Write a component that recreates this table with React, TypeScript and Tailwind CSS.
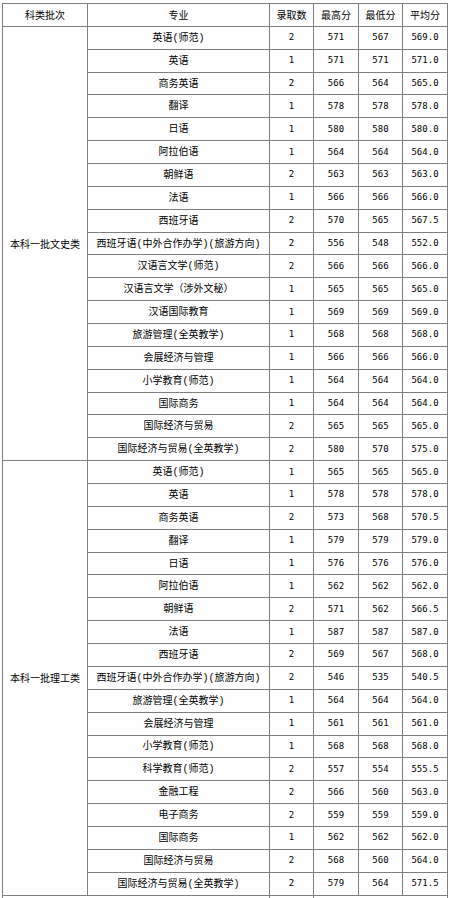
type Row = [string, number, number, number, string];

const groups: { label: string; rows: Row[] }[] = [
  {
    label: "本科一批文史类",
    rows: [
      ["英语(师范)", 2, 571, 567, "569.0"],
      ["英语", 1, 571, 571, "571.0"],
      ["商务英语", 2, 566, 564, "565.0"],
      ["翻译", 1, 578, 578, "578.0"],
      ["日语", 1, 580, 580, "580.0"],
      ["阿拉伯语", 1, 564, 564, "564.0"],
      ["朝鲜语", 2, 563, 563, "563.0"],
      ["法语", 1, 566, 566, "566.0"],
      ["西班牙语", 2, 570, 565, "567.5"],
      ["西班牙语(中外合作办学)(旅游方向)", 2, 556, 548, "552.0"],
      ["汉语言文学(师范)", 2, 566, 566, "566.0"],
      ["汉语言文学（涉外文秘）", 1, 565, 565, "565.0"],
      ["汉语国际教育", 1, 569, 569, "569.0"],
      ["旅游管理(全英教学)", 1, 568, 568, "568.0"],
      ["会展经济与管理", 1, 566, 566, "566.0"],
      ["小学教育(师范)", 1, 564, 564, "564.0"],
      ["国际商务", 1, 564, 564, "564.0"],
      ["国际经济与贸易", 2, 565, 565, "565.0"],
      ["国际经济与贸易(全英教学)", 2, 580, 570, "575.0"],
    ],
  },
  {
    label: "本科一批理工类",
    rows: [
      ["英语(师范)", 1, 565, 565, "565.0"],
      ["英语", 1, 578, 578, "578.0"],
      ["商务英语", 2, 573, 568, "570.5"],
      ["翻译", 1, 579, 579, "579.0"],
      ["日语", 1, 576, 576, "576.0"],
      ["阿拉伯语", 1, 562, 562, "562.0"],
      ["朝鲜语", 2, 571, 562, "566.5"],
      ["法语", 1, 587, 587, "587.0"],
      ["西班牙语", 2, 569, 567, "568.0"],
      ["西班牙语(中外合作办学)(旅游方向)", 2, 546, 535, "540.5"],
      ["旅游管理(全英教学)", 1, 564, 564, "564.0"],
      ["会展经济与管理", 1, 561, 561, "561.0"],
      ["小学教育(师范)", 1, 568, 568, "568.0"],
      ["科学教育(师范)", 2, 557, 554, "555.5"],
      ["金融工程", 2, 566, 560, "563.0"],
      ["电子商务", 2, 559, 559, "559.0"],
      ["国际商务", 1, 562, 562, "562.0"],
      ["国际经济与贸易", 2, 568, 560, "564.0"],
      ["国际经济与贸易(全英教学)", 2, 579, 564, "571.5"],
    ],
  },
];

const cell = "border border-[#7f7f7f] p-0 text-center align-middle";
const num = `${cell} font-['DejaVu_Sans_Mono',monospace] text-[9px]`;
// half-width latin like the original SimSun: mono for parens, CJK for the rest
const major = `${cell} pt-[2px] whitespace-nowrap font-['Liberation_Mono','Noto_Sans_CJK_SC',monospace] text-[10px]`;

export default function App() {
  return (
    <div className="h-[898px] overflow-hidden bg-white pl-[2px] pt-[3px] font-['Noto_Sans_CJK_SC',sans-serif] text-[10px] leading-none text-black">
      <table className="table-fixed border-collapse">
        <colgroup>
          <col className="w-[85px]" />
          <col className="w-[182px]" />
          <col className="w-[44px]" />
          <col className="w-[45px]" />
          <col className="w-[44px]" />
          <col className="w-[45px]" />
        </colgroup>
        <thead>
          <tr className="h-[22.87px]">
            <th className={`${cell} font-normal`}>科类批次</th>
            <th className={`${cell} font-normal`}>专业</th>
            <th className={`${cell} font-normal`}>录取数</th>
            <th className={`${cell} font-normal`}>最高分</th>
            <th className={`${cell} font-normal`}>最低分</th>
            <th className={`${cell} font-normal`}>平均分</th>
          </tr>
        </thead>
        <tbody>
          {groups.map((g) =>
            g.rows.map((r, i) => (
              <tr key={g.label + i} className="h-[22.87px]">
                {i === 0 && (
                  <td rowSpan={g.rows.length} className={cell}>
                    {g.label}
                  </td>
                )}
                <td className={major}>{r[0]}</td>
                <td className={num}>{r[1]}</td>
                <td className={num}>{r[2]}</td>
                <td className={num}>{r[3]}</td>
                <td className={num}>{r[4]}</td>
              </tr>
            ))
          )}
          {/* next group starts below the fold */}
          <tr className="h-[22.87px]">
            <td colSpan={2} className={cell} />
            <td className={cell} />
            <td colSpan={3} className={cell} />
          </tr>
        </tbody>
      </table>
    </div>
  );
}
